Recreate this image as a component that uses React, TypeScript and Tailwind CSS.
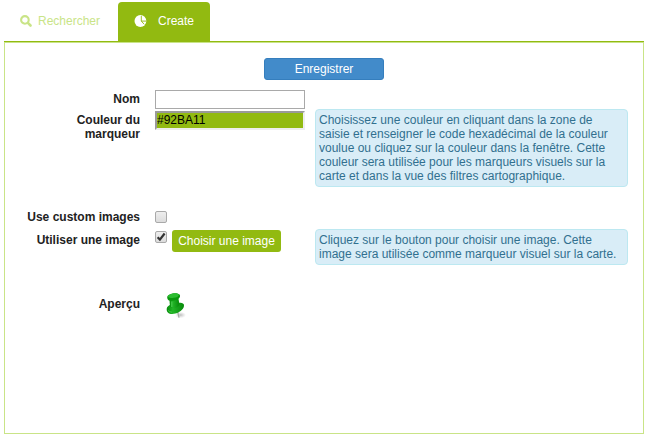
import type { ReactNode } from "react";

function SearchIcon() {
  return (
    <svg className="h-[12px] w-[12px] shrink-0" viewBox="0 0 12 12" fill="none" stroke="currentColor">
      <circle cx="4.9" cy="4.9" r="3.8" strokeWidth="2.1" />
      <path d="M7.9 7.9L10.5 10.5" strokeWidth="2.6" strokeLinecap="round" />
    </svg>
  );
}

function PieIcon() {
  return (
    <svg className="h-[12px] w-[13px] shrink-0" viewBox="0 0 13 12">
      <circle cx="6.4" cy="6" r="5.9" fill="#fff" />
      <path d="M7.3 0.8V6.1H12.1M7.3 6.1L10.2 9.3" stroke="#92ba11" strokeWidth="0.9" fill="none" />
    </svg>
  );
}

function PinIcon() {
  return (
    <svg className="h-[30px] w-[28px]" viewBox="0 0 28 30">
      <defs>
        <linearGradient id="pinBody" x1="0" x2="1">
          <stop offset="0" stopColor="#078b0b" />
          <stop offset=".35" stopColor="#22b527" />
          <stop offset="1" stopColor="#078a0a" />
        </linearGradient>
        <radialGradient id="pinShade">
          <stop offset="0" stopColor="#888" stopOpacity=".55" />
          <stop offset="1" stopColor="#aaa" stopOpacity="0" />
        </radialGradient>
      </defs>
      <ellipse cx="20.5" cy="24" rx="5.5" ry="3.2" fill="url(#pinShade)" />
      <path d="M17.5 20L19 26.7" stroke="#a5a9a5" strokeWidth="1.2" />
      <path d="M6.8 17.2C7.2 13.2 20.5 9.6 23.8 13.2C25 17.2 20.6 21 15.4 22.6C9.8 24 6 21.6 6.8 17.2Z" fill="url(#pinBody)" />
      <path d="M9.4 8L10 16C13 18.4 18.6 16.6 19.4 13.4L18.4 7Z" fill="url(#pinBody)" />
      <path d="M7.2 6.4C7 2.6 17.6 0.6 19.8 3.8C21.2 7 17 9.2 12.8 9.8C9.6 10 7.1 9.2 7.2 6.4Z" fill="#0a970e" />
      <ellipse cx="13.4" cy="4.7" rx="5.5" ry="2.2" transform="rotate(-9 13.4 4.7)" fill="#2bbd30" />
      <path d="M11.8 10.5V16" stroke="#45cb49" strokeWidth="1.3" />
      <path d="M8.2 19.4Q9.6 21.2 12 21.2" stroke="#3fcb43" fill="none" />
    </svg>
  );
}

function Checkbox({ checked = false }: { checked?: boolean }) {
  return (
    <span
      role="checkbox"
      aria-checked={checked}
      className="flex h-[12px] w-[12px] shrink-0 items-center justify-center rounded-[2px] border border-[#a9a9a9] bg-linear-to-b from-[#eeeeee] to-[#dcdcdc]"
    >
      {checked && (
        <svg className="h-[10px] w-[10px]" viewBox="0 0 10 10" fill="none">
          <path d="M1.6 5.3L3.9 7.6L8.6 1.5" stroke="#333" strokeWidth="2.2" />
        </svg>
      )}
    </span>
  );
}

function Row({ label, className, children }: { label: string; className: string; children: ReactNode }) {
  return (
    <div className={`flex items-start ${className}`}>
      <div className="w-[135px] shrink-0 pl-[20px] text-right font-bold text-[#222]">{label}</div>
      <div className="flex grow items-start pl-[15px]">{children}</div>
    </div>
  );
}

function Help({ lines }: { lines: string[] }) {
  return (
    <div className="w-[313px] rounded-[4px] border border-[#bce8f1] bg-[#d9edf7] p-[3px] whitespace-nowrap text-[#31708f]">
      {lines.map((line) => (
        <div key={line}>{line}</div>
      ))}
    </div>
  );
}

export default function App() {
  return (
    <div className="h-[437px] w-[648px] bg-white pt-[2px] pl-[4px] font-['Liberation_Sans',Arial,sans-serif] text-[12px] leading-[14px]">
      <nav className="flex h-[40px] w-[640px] border-b border-[#92ba11]">
        <div className="flex h-[38px] w-[114px] items-center pl-[16px] text-[#c9e487]">
          <SearchIcon />
          <span className="ml-[6px]">Rechercher</span>
        </div>
        <div className="flex h-[39px] w-[92px] items-center rounded-t-[4px] bg-[#92ba11] pb-px pl-[16px] text-white">
          <PieIcon />
          <span className="ml-[11px]">Create</span>
        </div>
      </nav>
      <main className="h-[392px] w-[640px] border border-[#c9e487] pt-[15px]">
        <button className="ml-[259px] block h-[22px] w-[120px] rounded-[3px] border border-[#357ebd] bg-[#428bca] text-center text-white">
          Enregistrer
        </button>
        <Row label="Nom" className="mt-[10px] h-[19px] [&>:first-child]:pt-[2px]">
          <input aria-label="Nom" className="h-[19px] w-[150px] border border-[#a9a9a9] bg-white" />
        </Row>
        <Row label="Couleur du marqueur" className="h-[102px] [&>:first-child]:pt-[4px]">
          <input
            aria-label="Couleur"
            defaultValue="#92BA11"
            className="mt-[2px] mr-[10px] h-[19px] w-[150px] border-2 border-t-[#9a9a9a] border-r-[#eeeeee] border-b-[#eeeeee] border-l-[#9a9a9a] bg-[#92ba11] pb-[2px] text-black"
          />
          <Help
            lines={[
              "Choisissez une couleur en cliquant dans la zone de",
              "saisie et renseigner le code hexadécimal de la couleur",
              "voulue ou cliquez sur la couleur dans la fenêtre. Cette",
              "couleur sera utilisée pour les marqueurs visuels sur la",
              "carte et dans la vue des filtres cartographique.",
            ]}
          />
        </Row>
        <Row label="Use custom images" className="h-[18px] [&>:first-child]:-mt-px">
          <Checkbox />
        </Row>
        <Row label="Utiliser une image" className="h-[62px] [&>:first-child]:pt-[4px]">
          <div className="mt-[2px]">
            <Checkbox checked />
          </div>
          <button className="mt-px mr-[34px] ml-[5px] h-[22px] w-[109px] rounded-[3px] bg-[#92ba11] text-white">
            Choisir une image
          </button>
          <Help
            lines={["Cliquez sur le bouton pour choisir une image. Cette", "image sera utilisée comme marqueur visuel sur la carte."]}
          />
        </Row>
        <Row label="Aperçu" className="[&>:first-child]:pt-[6px]">
          <div className="ml-[5px]">
            <PinIcon />
          </div>
        </Row>
      </main>
    </div>
  );
}
